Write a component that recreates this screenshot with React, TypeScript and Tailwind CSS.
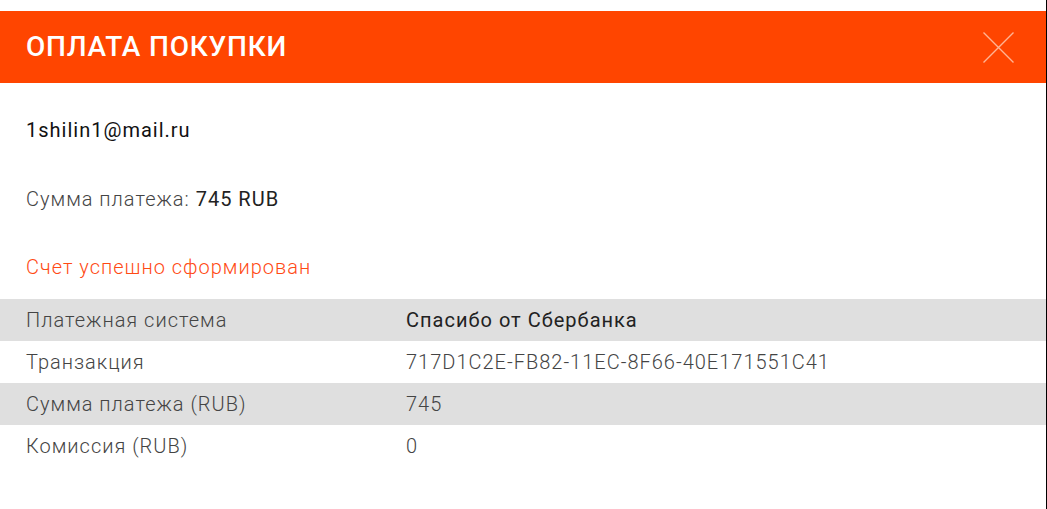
export default function App() {
  const rows = [
    { label: "Платежная система", value: "Спасибо от Сбербанка", bold: true },
    { label: "Транзакция", value: "717D1C2E-FB82-11EC-8F66-40E171551C41" },
    { label: "Сумма платежа (RUB)", value: "745" },
    { label: "Комиссия (RUB)", value: "0" },
  ];

  return (
    <div className="w-[1047px] h-[509px] bg-white border-r border-black pt-[11px] font-['Roboto',sans-serif] overflow-hidden">
      {/* ШАПКА */}
      <div className="h-[72px] bg-[#ff4500] flex items-center justify-between pl-[26px] pr-[32px]">
        <h1 className="text-white text-[28px] font-medium tracking-[0.8px] leading-none">ОПЛАТА ПОКУПКИ</h1>
        <button className="w-[31px] h-[31px]">
          <svg viewBox="0 0 31 31" className="w-[31px] h-[31px]">
            <path d="M0.5 0.5 L30.5 30.5 M30.5 0.5 L0.5 30.5" stroke="#ffb494" strokeWidth="1.4" fill="none" />
          </svg>
        </button>
      </div>

      {/* ИНФО */}
      <div className="px-[26px] pt-[33px] tracking-[1px]">
        <p className="text-[20px] leading-[28px] text-[#111]">1shilin1@mail.ru</p>
        <p className="text-[20px] leading-[28px] text-[#444] font-light mt-[41px]">
          Сумма платежа: <span className="font-normal text-[#222]">745 RUB</span>
        </p>
        <p className="text-[20px] leading-[28px] text-[#ff4a14] font-light mt-[40px]">Счет успешно сформирован</p>
      </div>

      {/* ТАБЛИЦА */}
      <div className="mt-[18px] tracking-[1px]">
        {rows.map((r, i) => (
          <div
            key={r.label}
            className={`h-[42px] flex items-center text-[20px] ${i % 2 === 0 ? "bg-[#dfdfdf]" : "bg-white"}`}
          >
            <span className="w-[406px] pl-[26px] font-light text-[#444]">{r.label}</span>
            <span className={r.bold ? "font-normal text-[#222]" : "font-light text-[#444]"}>{r.value}</span>
          </div>
        ))}
      </div>
    </div>
  );
}
